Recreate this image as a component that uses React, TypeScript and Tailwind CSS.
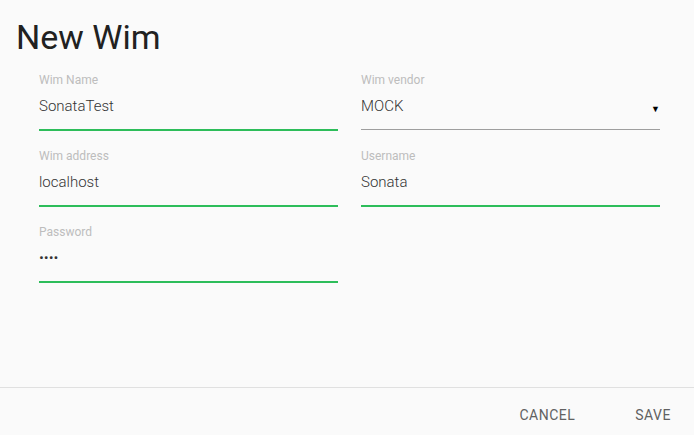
import { useState } from 'react';

type FieldProps = {
  label: string;
  value: string;
  type?: string;
  onChange: (v: string) => void;
};

const Field = ({ label, value, type = 'text', onChange }: FieldProps) => (
  <div className="flex flex-col">
    <label className="text-[12px] leading-4 text-[#bdbdbd]">{label}</label>
    <input
      type={type}
      value={value}
      onChange={(e) => onChange(e.target.value)}
      className="mt-[6px] h-6 text-[15px] leading-6 font-light text-[#333] bg-transparent outline-none"
    />
    <div className="mt-[11px] h-[2px] bg-[#2dbd5a]" />
  </div>
);

const App = () => {
  const [form, setForm] = useState({
    name: 'SonataTest',
    vendor: 'MOCK',
    address: 'localhost',
    username: 'Sonata',
    password: 'test',
  });

  const set = (key: keyof typeof form) => (v: string) => setForm({ ...form, [key]: v });

  return (
    <div
      className="w-[694px] h-[435px] bg-[#fafafa] flex flex-col"
      style={{ fontFamily: 'Roboto, "Liberation Sans", sans-serif' }}
    >
      <h1 className="pl-4 pt-[15px] text-[34px] leading-[44px] text-[#212121]">New Wim</h1>
      <div className="flex-1 px-[39px] pt-[13px]">
        <div className="grid grid-cols-[299px_299px] gap-x-[23px] gap-y-[17px]">
          <Field label="Wim Name" value={form.name} onChange={set('name')} />
          <div className="flex flex-col">
            <label className="text-[12px] leading-4 text-[#bdbdbd]">Wim vendor</label>
            <div className="mt-[6px] h-6 flex items-center justify-between text-[15px] leading-6 font-light text-[#333]">
              <span>{form.vendor}</span>
              <span className="text-[9px] text-black mt-[5px]">▼</span>
            </div>
            <div className="mt-[11px] h-[1px] bg-[#9e9e9e]" />
            <div className="h-[1px]" />
          </div>
          <Field label="Wim address" value={form.address} onChange={set('address')} />
          <Field label="Username" value={form.username} onChange={set('username')} />
          <Field label="Password" type="password" value={form.password} onChange={set('password')} />
        </div>
      </div>
      <div className="h-[48px] pt-2 border-t border-[#e0e0e0] flex items-center justify-end gap-[60px] pr-[23px]">
        <button className="text-[14px] text-[#616161] tracking-[0.5px]">CANCEL</button>
        <button className="text-[14px] text-[#616161] tracking-[0.5px]">SAVE</button>
      </div>
    </div>
  );
};

export default App;
